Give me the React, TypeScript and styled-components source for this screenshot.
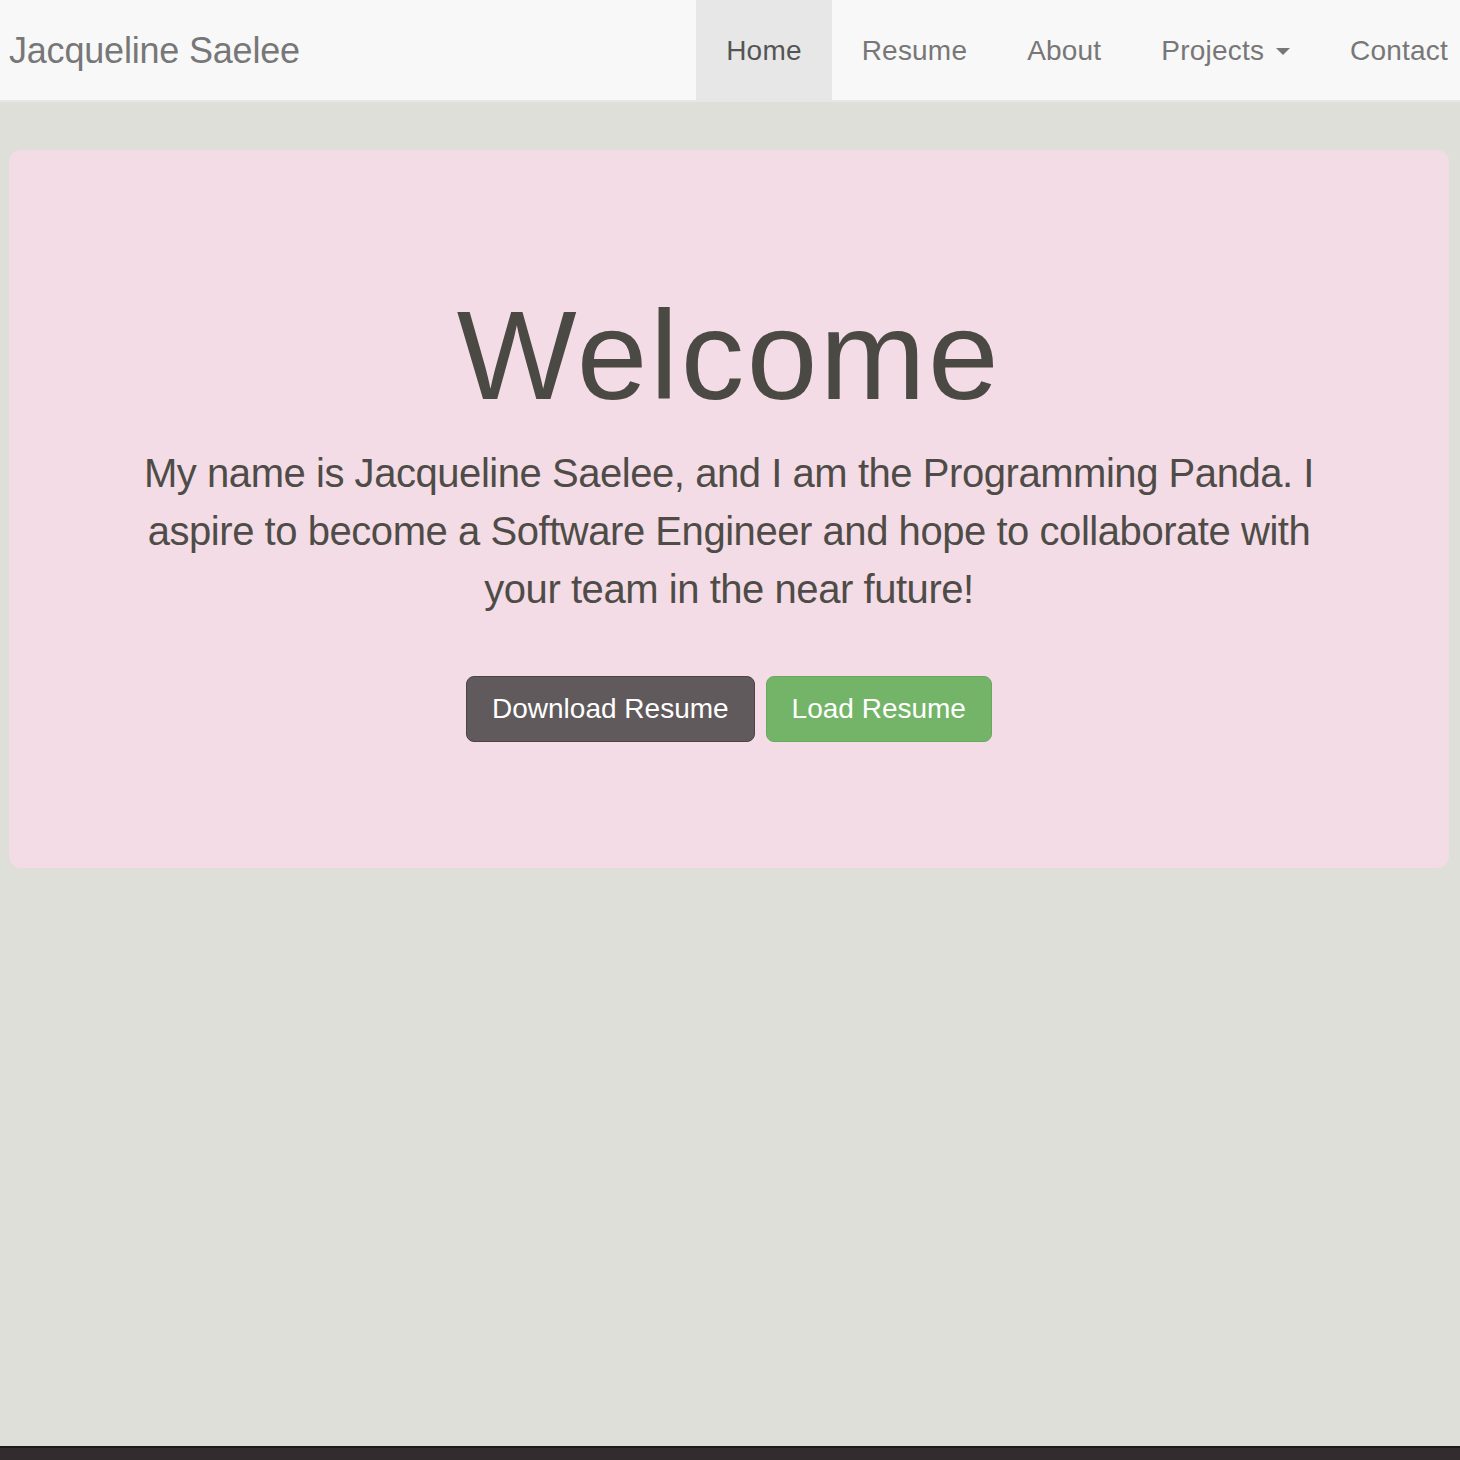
import React from "react";
import styled, { createGlobalStyle } from "styled-components";

const Global = createGlobalStyle`
  html, body { margin: 0; padding: 0; }
  body {
    background: #dddfd8;
    font-family: "Liberation Sans", Arial, Helvetica, sans-serif;
    overflow: hidden;
  }
  #root { min-height: 1460px; display: flex; flex-direction: column; }
`;

const Navbar = styled.header`
  height: 102px;
  background: #f8f8f8;
  border-bottom: 2px solid #e7e7e7;
  display: flex;
  align-items: stretch;
  justify-content: space-between;
  box-sizing: border-box;
  overflow: hidden;
`;

const Brand = styled.a`
  display: flex;
  align-items: center;
  padding-left: 9px;
  padding-top: 1px;
  font-size: 36px;
  color: #777;
  text-decoration: none;
  letter-spacing: -0.2px;
`;

const Nav = styled.nav`
  display: flex;
  margin-right: -18px;
`;

const NavItem = styled.a<{ $active?: boolean }>`
  display: flex;
  align-items: center;
  gap: 12px;
  padding: 1px 30px 0;
  font-size: 28px;
  letter-spacing: 0.2px;
  color: ${(p) => (p.$active ? "#555" : "#777")};
  background: ${(p) => (p.$active ? "#e7e7e7" : "transparent")};
  text-decoration: none;
`;

const Caret = styled.span`
  width: 0;
  height: 0;
  border-left: 7.5px solid transparent;
  border-right: 7.5px solid transparent;
  border-top: 7px solid #777;
  margin-top: 2px;
`;

const Main = styled.main`
  flex: 1;
  padding: 48px 11px 0 9px;
`;

const Jumbotron = styled.section`
  background: #f3dce6;
  border-radius: 12px;
  padding: 96px 120px 126px;
  text-align: center;
  color: #4b4944;
`;

const Title = styled.h1`
  margin: 40px 0 18px;
  font-size: 127px;
  line-height: 1.1;
  font-weight: 500;
  letter-spacing: 2.5px;
`;

const Lead = styled.p`
  margin: 0 auto 30px;
  max-width: 1190px;
  font-size: 40px;
  line-height: 58px;
  font-weight: 300;
  color: #4f4c48;
  letter-spacing: -0.45px;
`;

const Actions = styled.div`
  display: flex;
  justify-content: center;
  gap: 11px;
  padding-top: 28px;
`;

const Button = styled.a<{ $variant: "dark" | "green" }>`
  display: inline-block;
  padding: 12px 25px;
  font-size: 28px;
  line-height: 40px;
  color: #fff;
  border-radius: 8px;
  text-decoration: none;
  background: ${(p) => (p.$variant === "dark" ? "#605a5c" : "#74b468")};
  border: 1px solid ${(p) => (p.$variant === "dark" ? "#4a4446" : "#6aa85f")};
`;

const Footer = styled.footer`
  height: 12px;
  background: #322c2e;
  border-top: 2px solid #1c1a1a;
`;

export default function App() {
  return (
    <>
      <Global />
      <Navbar>
        <Brand href="#">Jacqueline Saelee</Brand>
        <Nav>
          <NavItem $active href="#">Home</NavItem>
          <NavItem href="#">Resume</NavItem>
          <NavItem href="#">About</NavItem>
          <NavItem href="#">
            Projects <Caret />
          </NavItem>
          <NavItem href="#">Contact</NavItem>
        </Nav>
      </Navbar>
      <Main>
        <Jumbotron>
          <Title>Welcome</Title>
          <Lead>
            My name is Jacqueline Saelee, and I am the Programming Panda. I aspire to become a
            Software Engineer and hope to collaborate with your team in the near future!
          </Lead>
          <Actions>
            <Button $variant="dark" href="#">Download Resume</Button>
            <Button $variant="green" href="#">Load Resume</Button>
          </Actions>
        </Jumbotron>
      </Main>
      <Footer />
    </>
  );
}
